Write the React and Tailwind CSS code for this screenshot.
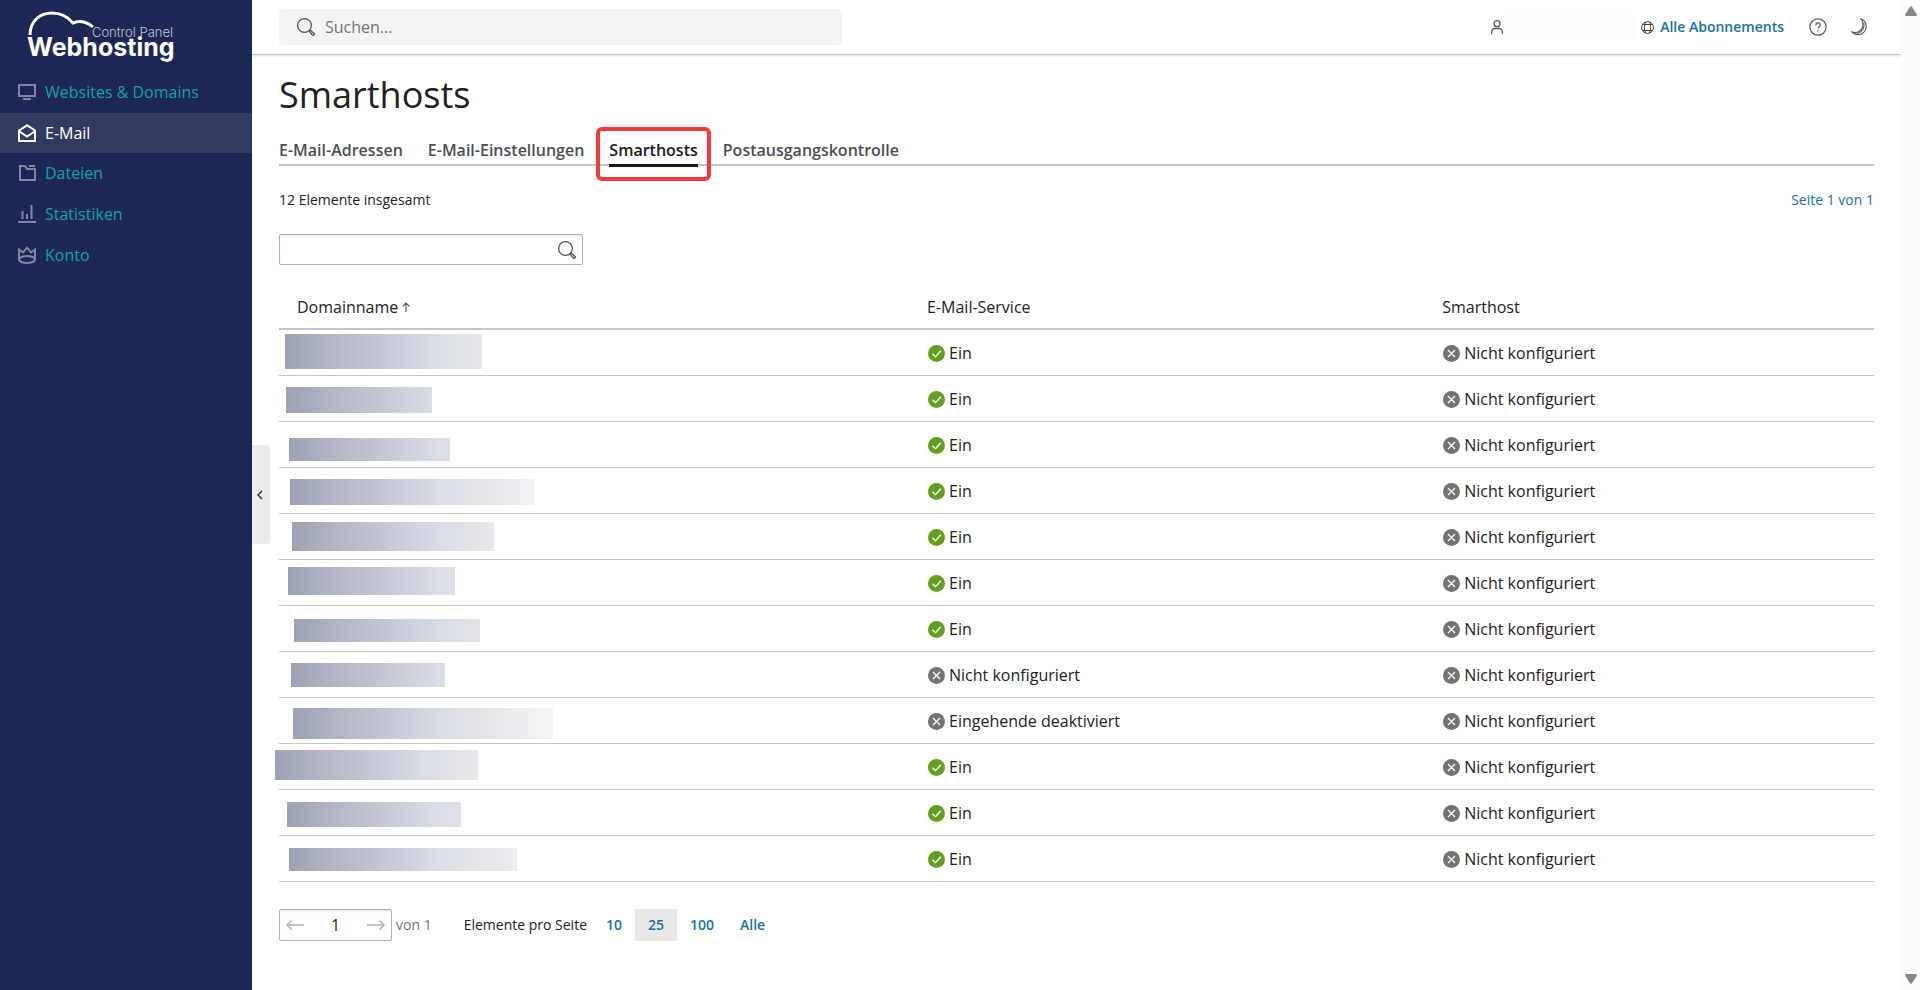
import { useState } from 'react';

const navItems = [
  { label: 'Websites & Domains', icon: 'monitor' },
  { label: 'E-Mail', icon: 'mail' },
  { label: 'Dateien', icon: 'folder' },
  { label: 'Statistiken', icon: 'stats' },
  { label: 'Konto', icon: 'crown' },
];

const tabs = ['E-Mail-Adressen', 'E-Mail-Einstellungen', 'Smarthosts', 'Postausgangskontrolle'];

// mask = the block that hides the domain name: left, top, width, height inside the cell
const domains = [
  { service: 'Ein', on: true, mask: [6, 4, 197, 35] },
  { service: 'Ein', on: true, mask: [7, 11, 146, 26] },
  { service: 'Ein', on: true, mask: [10, 16, 161, 23] },
  { service: 'Ein', on: true, mask: [11, 11, 244, 26] },
  { service: 'Ein', on: true, mask: [13, 8, 202, 29] },
  { service: 'Ein', on: true, mask: [9, 7, 167, 28] },
  { service: 'Ein', on: true, mask: [15, 13, 186, 23] },
  { service: 'Nicht konfiguriert', on: false, mask: [12, 11, 154, 24] },
  { service: 'Eingehende deaktiviert', on: false, mask: [14, 10, 260, 31] },
  { service: 'Ein', on: true, mask: [-4, 6, 203, 30] },
  { service: 'Ein', on: true, mask: [8, 12, 174, 25] },
  { service: 'Ein', on: true, mask: [10, 12, 228, 23] },
];

const pageSizes = ['10', '25', '100', 'Alle'];

function NavIcon({ name }) {
  return (
    <svg width="18" height="18" viewBox="0 0 18 18" fill="none" stroke="currentColor" strokeWidth="2" className="shrink-0" aria-hidden="true">
      {name === 'monitor' && (
        <>
          <path d="M1 2h16v11H1z" />
          <path d="M5 16h8" />
        </>
      )}
      {name === 'mail' && (
        <>
          <path d="M1 6.500 9 1.300l8 5.200V17H1z" />
          <path d="M1.500 7.500 9 12.500l7.500-5" />
        </>
      )}
      {name === 'folder' && (
        <>
          <path d="M2 16V2h5l2 3h8v11z" />
          <path d="M11 2h6" />
        </>
      )}
      {name === 'stats' && (
        <>
          <path d="M0 17h18" />
          <path d="M4.500 14V6M9 14V9M13.500 14V0" />
        </>
      )}
      {name === 'crown' && (
        <>
          <path d="M1 13.500V3.500l4 3L9 1.700l4 4.800 4-3v10" />
          <ellipse cx="9" cy="13.500" rx="8" ry="3.500" />
        </>
      )}
    </svg>
  );
}

function SearchIcon() {
  return (
    <svg width="18" height="18" viewBox="0 0 18 18" fill="none" stroke="#55565a" strokeWidth="1.300" className="shrink-0" aria-hidden="true">
      <circle cx="7.500" cy="7.500" r="6.900" />
      <path d="m12.200 13.300 1.100-1.100 3.600 3.100a1.100 1.100 0 0 1-1.500 1.700z" />
    </svg>
  );
}

function StatusIcon({ on }) {
  return (
    <svg width="17" height="17" viewBox="0 0 17 17" fill="none" className="shrink-0" aria-hidden="true">
      <circle cx="8.500" cy="8.500" r="8.500" fill={on ? '#659f20' : '#737373'} />
      <path d={on ? 'm4.500 8.800 3 3 5.300-6' : 'm5 5 7 7m0-7-7 7'} stroke="#fff" strokeWidth="1.300" />
    </svg>
  );
}

function Status({ on, children }) {
  return (
    <span className="flex items-center gap-1">
      <StatusIcon on={on} />
      {children}
    </span>
  );
}

function Arrow({ flip }) {
  return (
    <svg width="18" height="10" viewBox="0 0 18 10" fill="none" stroke="#b0b3bf" strokeWidth="1.500" className={flip ? 'rotate-180' : ''} aria-hidden="true">
      <path d="M1 5h17M5.500.5 1 5l4.500 4.500" />
    </svg>
  );
}

function Sidebar() {
  return (
    <aside className="relative w-[252px] shrink-0 bg-[#1d2755]">
      <a href="#home" aria-label="Webhosting Control Panel" className="relative block h-[72px] pl-[27px] pt-6 text-white font-[Inter]">
        <svg width="66" height="25" viewBox="0 0 66 25" fill="none" stroke="#fff" strokeWidth="3" className="absolute left-7 top-[11px]" aria-hidden="true">
          <path d="M2 24C2 10 12 2 24 2c9 0 16 4 21 10 7-3 15-1 20 4" />
        </svg>
        <span className="block w-[146px] text-right text-[13px] leading-[16px] font-light text-[#c3c7d6]">Control Panel</span>
        <span className="block text-[25px] leading-[14px] font-bold">Webhosting</span>
      </a>
      <nav>
        <ul className="grid h-[203px] grid-rows-5">
          {navItems.map(item => {
            const active = item.label === 'E-Mail';
            return (
              <li key={item.label} className="grid">
                <a href="#nav" className={`flex items-center gap-[9px] pl-[18px] ${active ? 'bg-[#303a63] text-white' : 'text-[#0fa3a3]'}`}>
                  <span className={active ? 'text-white' : 'text-[#8187a3]'}><NavIcon name={item.icon} /></span>
                  {item.label}
                </a>
              </li>
            );
          })}
        </ul>
      </nav>
      <button type="button" aria-label="Seitenleiste einklappen" className="absolute left-full top-[445px] flex h-[99px] w-[18px] items-center rounded-r bg-[#e9ebec] pl-[5px]">
        <svg width="6" height="10" viewBox="0 0 6 10" fill="none" stroke="#222" strokeWidth="1.300" aria-hidden="true">
          <path d="M5 1 1 5l4 4" />
        </svg>
      </button>
    </aside>
  );
}

function TopBar() {
  return (
    <header className="flex h-[55px] items-center justify-between border-b border-[#c6c6c6] pl-[27px] pr-[34px] shadow-[0_1px_2px_rgba(0,0,0,0.15)]">
      <label className="flex h-9 w-[563px] items-center gap-[10px] rounded bg-[#f4f4f4] pl-[18px]">
        <SearchIcon />
        <input type="text" aria-label="Suchen" placeholder="Suchen..." className="w-full bg-transparent outline-none placeholder:text-[#737373]" />
      </label>
      <div className="flex items-center">
        <button type="button" aria-label="Benutzer" className="flex items-center gap-[3px]">
          <svg width="12" height="14" viewBox="0 0 12 14" fill="none" stroke="#55565a" strokeWidth="1.300" aria-hidden="true">
            <circle cx="6" cy="3.700" r="3" />
            <path d="M.7 14v-2.500a3 3 0 0 1 3-3h4.600a3 3 0 0 1 3 3V14" />
          </svg>
          <span className="h-6 w-[130px] bg-[#fdfdfd]" />
        </button>
        <a href="#abos" className="ml-[5px] flex items-center gap-[6px] text-sm font-semibold text-[#1672a0]">
          <svg width="13" height="13" viewBox="0 0 13 13" fill="none" stroke="#444" strokeWidth="1" aria-hidden="true">
            <circle cx="6.500" cy="6.500" r="5.900" />
            <path d="M4.500 1C3 4.500 3 8.500 4.500 12M8.500 1c1.500 3.500 1.500 7.500 0 11M2 3.500h9M2 9.500h9" />
          </svg>
          Alle Abonnements
        </a>
        <button type="button" aria-label="Hilfe" className="ml-[25px]">
          <svg width="18" height="18" viewBox="0 0 18 18" fill="none" stroke="#55565a" strokeWidth="1.200" aria-hidden="true">
            <circle cx="9" cy="9" r="8.200" />
            <path d="M6.800 7.200C6.800 4 11.400 4.200 11.300 7c0 1.700-2.300 1.800-2.300 3.600M9 12v1.500" />
          </svg>
        </button>
        <button type="button" aria-label="Dunkles Design" className="ml-6">
          <svg width="16" height="18" viewBox="0 0 16 18" fill="none" stroke="#55565a" strokeWidth="1.100" aria-hidden="true">
            <path d="M10 .8c3.500 1.500 5.300 4.700 5.200 8-.2 4.700-3.700 7.700-7.700 7.700-2.700 0-5-.9-6.500-2.500 5 1.500 9.500-.5 10.700-5 .7-2.800.1-5.700-1.700-8.200z" />
            <path d="M12.800 4.500c1 5-1 9.500-6.300 11" />
          </svg>
        </button>
      </div>
    </header>
  );
}

function Tabs() {
  return (
    <nav className="mt-5 flex gap-[25px] border-b-2 border-[#c6c6c6]">
      {tabs.map(tab => {
        const active = tab === 'Smarthosts';
        return (
          <a key={tab} href="#tab" className={`relative pb-[3px] leading-[22px] font-semibold ${active ? 'text-[#1a1a1a]' : 'text-[#4d4e52]'}`}>
            {tab}
            {active && <span className="absolute inset-x-0 -bottom-[3px] h-[3px] bg-[#1a1a1a]" />}
            {active && <span className="absolute -inset-x-[13px] -top-[12px] h-[54px] rounded-md border-4 border-[#f43b3b]" />}
          </a>
        );
      })}
    </nav>
  );
}

function DomainTable() {
  return (
    <table className="mt-5 w-full table-fixed text-left">
      <thead>
        <tr className="h-11 border-b-2 border-[#c6c6c6]">
          <th className="w-[39.500%] pl-[18px] font-normal">
            <button type="button" className="flex items-center gap-1">
              Domainname
              <svg width="8" height="10" viewBox="0 0 8 10" fill="none" stroke="#555" strokeWidth="1.200" aria-hidden="true">
                <path d="M4 10V1M.7 4.300 4 1l3.300 3.300" />
              </svg>
            </button>
          </th>
          <th className="w-[32.300%] pl-[18px] font-normal">E-Mail-Service</th>
          <th className="pl-[18px] font-normal">Smarthost</th>
        </tr>
      </thead>
      <tbody>
        {domains.map(({ service, on, mask }, i) => (
          <tr key={i} className="h-[46px] border-b border-[#c6c6c6]">
            <td className="relative">
              <span
                className="absolute bg-[linear-gradient(90deg,#9da2b4_0px,#b8bcca_60px,#d9dde6_150px,#e3e4e8_185px,#f0f1f3_240px,#f6f6f6_260px)]"
                style={{ left: mask[0], top: mask[1], width: mask[2], height: mask[3] }}
              />
            </td>
            <td className="pl-[19px] pt-[2px]"><Status on={on}>{service}</Status></td>
            <td className="pl-[19px] pt-[2px]"><Status on={false}>Nicht konfiguriert</Status></td>
          </tr>
        ))}
      </tbody>
    </table>
  );
}

function Pager({ size, onSize }) {
  return (
    <div className="mt-[27px] flex items-center text-sm">
      <div className="flex h-8 w-[113px] items-center justify-between rounded-xs border border-[#b0b1b8] px-[6px] shadow-[inset_0_2px_2px_rgba(0,0,0,0.06)]">
        <button type="button" aria-label="Zurück"><Arrow /></button>
        <input type="text" aria-label="Seite" defaultValue="1" className="w-12 bg-transparent text-center text-base outline-none" />
        <button type="button" aria-label="Weiter"><Arrow flip /></button>
      </div>
      <span className="ml-1 text-[#737373]">von 1</span>
      <span className="ml-8">Elemente pro Seite</span>
      <div className="ml-[6px] flex">
        {pageSizes.map(s => (
          <button
            key={s}
            type="button"
            onClick={() => onSize(s)}
            className={`h-8 rounded-xs px-[13px] font-semibold text-[#1672a0] ${s === size ? 'bg-[#e8e8e8]' : ''}`}
          >
            {s}
          </button>
        ))}
      </div>
    </div>
  );
}

function ScrollRail() {
  return (
    <div className="flex w-[19px] shrink-0 flex-col items-center justify-between bg-[#fcfcfc] py-[6px]" aria-hidden="true">
      <svg width="12" height="10" viewBox="0 0 12 10" fill="#868686"><path d="M5 .8a1.300 1.300 0 0 1 2 0l4.700 7.400A1.200 1.200 0 0 1 10.700 10H1.300A1.200 1.200 0 0 1 .3 8.200z" /></svg>
      <svg width="12" height="10" viewBox="0 0 12 10" fill="#868686"><path d="M5 9.200a1.300 1.300 0 0 0 2 0l4.700-7.400A1.200 1.200 0 0 0 10.700 0H1.300A1.200 1.200 0 0 0 .3 1.800z" /></svg>
    </div>
  );
}

export default function App() {
  const [size, setSize] = useState('25');

  return (
    <div className="flex min-h-screen bg-white text-base text-[#222] font-['Open_Sans',sans-serif]">
      <Sidebar />
      <div className="min-w-0 flex-1">
        <TopBar />
        <main className="px-[27px] pt-4">
          <h1 className="text-4xl leading-[48px]">Smarthosts</h1>
          <Tabs />
          <div className="mt-6 flex justify-between text-sm">
            <span>12 Elemente insgesamt</span>
            <a href="#page" className="text-[#1672a0]">Seite 1 von 1</a>
          </div>
          <label className="mt-6 flex h-[31px] w-[304px] items-center rounded-xs border border-[#b0b1b8] pr-[6px] shadow-[inset_0_2px_2px_rgba(0,0,0,0.06)]">
            <input type="text" aria-label="Domain suchen" className="w-full bg-transparent px-2 outline-none" />
            <SearchIcon />
          </label>
          <DomainTable />
          <Pager size={size} onSize={setSize} />
        </main>
      </div>
      <ScrollRail />
    </div>
  );
}
